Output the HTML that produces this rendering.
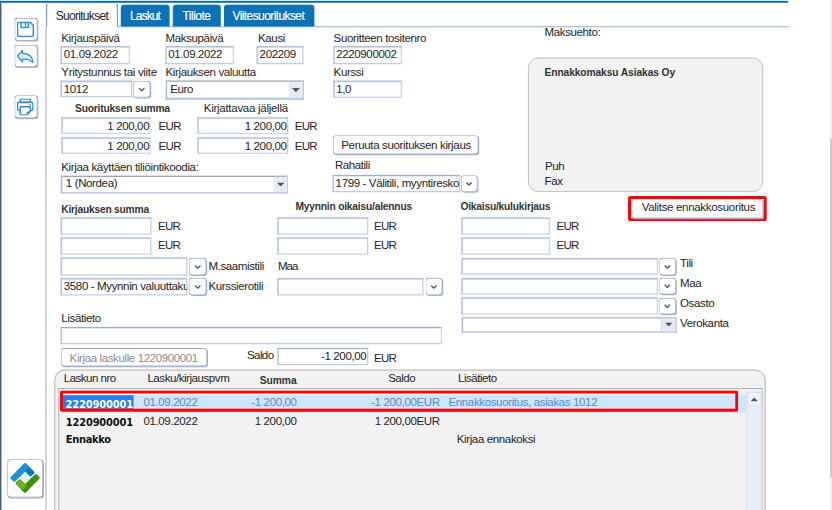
<!DOCTYPE html>
<html lang="fi">
<head>
<meta charset="utf-8">
<title>Suoritukset</title>
<style>
html,body{margin:0;padding:0;}
body{width:832px;height:510px;overflow:hidden;background:#fff;position:relative;
 font-family:"Liberation Sans",sans-serif;color:#1c1c1c;}
#s{position:absolute;left:0;top:0;width:1040px;height:638px;transform:scale(.8);transform-origin:0 0;overflow:hidden;
 font-family:"Liberation Sans",sans-serif;font-size:13.75px;}
#s div,#s span,#s svg,#s i{position:absolute;box-sizing:border-box;display:block;}
.f{position:absolute;}
.t{white-space:nowrap;line-height:16px;height:16px;font-size:14.4px;letter-spacing:-0.46px;color:#242424;}
.b{font-weight:bold;font-size:12.8px;letter-spacing:-0.25px;color:#333;}
.lb{font-family:"DejaVu Sans Condensed","DejaVu Sans","Liberation Sans",sans-serif;font-stretch:condensed;font-weight:bold;font-size:13.75px;letter-spacing:0;color:#111;}
.w{color:#fff;-webkit-text-stroke:0.2px #fff;}
.tb{font-size:15px;}
.in{border:1px solid #b1c1dc;border-top-color:#8a9cba;border-left-color:#90a3c2;background:#fff;box-shadow:inset 1px 1px 0 #dde5f1, 0 0 0 1px rgba(205,216,235,.4);overflow:hidden;}
.cb{background:#fff;border:2px solid #bccae3;border-left-color:#aebdd9;border-top:1px solid #cfdaec;}
.cb i{left:0;right:0;top:0;height:1px;background:#8e8e8e;}
.dd{border:1px solid #a3b3cf;border-top-color:#8f8f8f;border-radius:4px;background:#fff;box-shadow:1px 1px 0 #a0b3d4;}
.btn{border:1px solid #a3b3cf;border-top-color:#8f8f8f;border-radius:4px;background:#fff;box-shadow:1px 1px 0 #a0b3d4;}
.ib{border:1px solid #90959f;border-top-color:#8c8c8c;border-radius:4px;background:#fff;box-shadow:1px 1px 0 #a3b4d2;}
.arr{background:#e5eaf5;}
</style>
</head>
<body>
<div id="s">
<div class="x" style="left:56.7px;top:33px;width:1.1px;height:610px;background:#8f929a;"></div>
<div class="x" style="left:146.5px;top:32.6px;width:839px;height:1.2px;background:#6f9ad0;"></div>
<div class="ib" style="left:18px;top:22px;width:29px;height:29px;"></div>
<div class="ib" style="left:18px;top:56px;width:29px;height:28px;"></div>
<div class="ib" style="left:18px;top:119px;width:29px;height:29px;"></div>
<div class="ib" style="left:9px;top:574px;width:45px;height:48px;"></div>
<svg width="21.5" height="19.5" viewBox="0 0 17.2 15.6" style="left:21.38px;top:27.25px;"><path d="M2.4 0.7 H13.4 L16.5 3.8 V13 Q16.5 14.9 14.6 14.9 H2.6 Q0.7 14.9 0.7 13 V2.4 Q0.7 0.7 2.4 0.7 Z" fill="none" stroke="#2a8be0" stroke-width="1.45"/><path d="M3.6 0.7 V5.6 Q3.6 6.6 4.6 6.6 H11.4 Q12.4 6.6 12.4 5.6 V0.7 Z" fill="#2a8be0"/><rect x="5" y="1.6" width="3" height="3.8" fill="#fff"/><rect x="9.2" y="1.6" width="1.6" height="3.8" fill="#dff0ff"/></svg>
<svg width="21.25" height="17.25" viewBox="0 0 17 13.8" style="left:21.38px;top:61.75px;"><path d="M0.7 6.5 L5.7 0.8 V3.8 C11.6 3.8 15.7 6.6 16.3 13.1 C14 10.2 10.6 9.3 5.7 9.5 V12.4 Z" fill="#e3f0fd" stroke="#2a8be0" stroke-width="1.25" stroke-linejoin="round"/></svg>
<svg width="21" height="21.5" viewBox="0 0 16.8 17.2" style="left:21.25px;top:122.5px;"><rect x="3.4" y="0.7" width="10" height="3.4" rx="1" fill="none" stroke="#2a8be0" stroke-width="1.45"/><path d="M3.4 12 H2.4 Q0.7 12 0.7 10.3 V5.6 Q0.7 3.9 2.4 3.9 H14.4 Q16.1 3.9 16.1 5.6 V10.3 Q16.1 12 14.4 12 H13.4" fill="none" stroke="#2a8be0" stroke-width="1.45"/><path d="M3.4 8.4 H13.4 V13 L10 16.5 H4.4 Q3.4 16.5 3.4 15.5 Z" fill="#fff" stroke="#2a8be0" stroke-width="1.45" stroke-linejoin="round"/><path d="M13.4 13 L10 16.5 V13 Z" fill="#2a8be0"/><circle cx="13.3" cy="6.3" r="0.8" fill="#2a8be0"/></svg>
<svg width="38.75" height="38.75" viewBox="0 0 30 30" style="left:12.38px;top:577.88px;"><g transform="rotate(45 15 15)"><rect x="10.4" y="10.4" width="9.2" height="9.2" fill="#eaedf4"/><rect x="4.55" y="4.55" width="13.6" height="6.15" rx="1.3" fill="#0f77c8"/><rect x="4.55" y="4.55" width="6.15" height="20.9" rx="1.6" fill="#1c90de"/><rect x="19.3" y="4.55" width="6.15" height="20.9" rx="1.6" fill="#3e9113"/><rect x="11.85" y="19.3" width="13.6" height="6.15" rx="1.3" fill="#3e9113"/><rect x="11.85" y="19.3" width="9.5" height="6.15" rx="1.3" fill="#69af22"/><rect x="17" y="19.3" width="4.35" height="6.15" fill="#69af22"/></g></svg>
<div class="x" style="left:56.6px;top:4px;width:91.2px;height:29.8px;background:#fff;border:2px solid #7f9ac2;border-top:1px solid #d3d6dc;border-bottom:none;border-radius:4px 4px 0 0;"></div>
<span id="t1" class="t tb" style="left:69.62px;top:12.4px;letter-spacing:-0.87px;">Suoritukset</span>
<div class="x" style="left:151px;top:6px;width:61px;height:27px;background:#0a72b6;border-radius:4px 4px 0 0;"></div>
<span id="t2" class="t w tb" style="left:162.5px;top:12.4px;letter-spacing:-1.1px;">Laskut</span>
<div class="x" style="left:216px;top:6px;width:60px;height:27px;background:#0a72b6;border-radius:4px 4px 0 0;"></div>
<span id="t3" class="t w tb" style="left:228.12px;top:12.4px;letter-spacing:-0.63px;">Tiliote</span>
<div class="x" style="left:280px;top:6px;width:113px;height:27px;background:#0a72b6;border-radius:4px 4px 0 0;"></div>
<span id="t4" class="t w tb" style="left:290.62px;top:12.4px;letter-spacing:-0.74px;">Viitesuoritukset</span>
<span id="t5" class="t " style="left:76.62px;top:39.15px;">Kirjauspäivä</span>
<span id="t6" class="t " style="left:206.88px;top:39.15px;">Maksupäivä</span>
<span id="t7" class="t " style="left:322.5px;top:39.15px;">Kausi</span>
<span id="t8" class="t " style="left:417px;top:39.15px;">Suoritteen tositenro</span>
<span id="t9" class="t " style="left:680.62px;top:32.4px;">Maksuehto:</span>
<div class="in" style="left:76px;top:58px;width:86px;height:22px;"></div>
<span id="t10" class="t " style="left:79.75px;top:59.9px;">01.09.2022</span>
<div class="in" style="left:207px;top:58px;width:85px;height:22px;"></div>
<span id="t11" class="t " style="left:210.25px;top:59.9px;">01.09.2022</span>
<div class="in" style="left:321px;top:58px;width:58px;height:22px;"></div>
<span id="t12" class="t " style="left:324.5px;top:59.9px;">202209</span>
<div class="in" style="left:417px;top:58px;width:85px;height:22px;"></div>
<span id="t13" class="t " style="left:420.25px;top:59.9px;">2220900002</span>
<span id="t14" class="t " style="left:76.62px;top:81.78px;letter-spacing:-0.39px;">Yritystunnus tai viite</span>
<span id="t15" class="t " style="left:206.88px;top:81.78px;">Kirjauksen valuutta</span>
<span id="t16" class="t " style="left:417px;top:81.78px;">Kurssi</span>
<div class="in" style="left:76px;top:101px;width:89px;height:20px;"></div>
<span id="t17" class="t " style="left:79.75px;top:103.03px;">1012</span>
<div class="dd" style="left:166px;top:101px;width:22px;height:21px;"><svg width="8.5" height="5.5" viewBox="0 0 6.8 4.4" style="left:50%;top:50%;margin-left:-4.3px;margin-top:-2.2px;"><path d="M0.7 0.8 L3.4 3.5 L6.1 0.8" fill="none" stroke="#585858" stroke-width="1.4"/></svg></div>
<div class="cb" style="left:207px;top:100px;width:173px;height:25px;border-bottom-width:3px;"><i></i></div>
<div class="x" style="left:361px;top:102px;width:1px;height:20px;background:#d3ddee;"></div>
<div class="arr" style="left:362px;top:103px;width:16px;height:19px;"><svg width="9.75" height="5.25" viewBox="0 0 7.8 4.2" style="left:50%;top:50%;margin-left:-4.9px;margin-top:-2.9px;"><path d="M0 0 H7.8 L3.9 4.2 Z" fill="#4b556e"/></svg></div>
<span id="t18" class="t " style="left:212.75px;top:103.03px;">Euro</span>
<div class="in" style="left:417px;top:101px;width:85px;height:21px;"></div>
<span id="t19" class="t " style="left:420.25px;top:103.03px;">1,0</span>
<span id="t20" class="t b" style="left:93.75px;top:128.15px;letter-spacing:-0.22px;">Suorituksen summa</span>
<span id="t21" class="t " style="left:254.75px;top:126.78px;letter-spacing:-0.35px;">Kirjattavaa jäljellä</span>
<div class="in" style="left:77px;top:147px;width:111px;height:20px;"></div>
<span id="t22" class="t " style="right:853.5px;top:149.9px;">1 200,00</span>
<span id="t23" class="t " style="left:198px;top:149.9px;letter-spacing:-0.66px;">EUR</span>
<div class="in" style="left:247px;top:147px;width:113px;height:20px;"></div>
<span id="t24" class="t " style="right:681.75px;top:149.9px;">1 200,00</span>
<span id="t25" class="t " style="left:368.38px;top:149.9px;letter-spacing:-0.91px;">EUR</span>
<div class="in" style="left:77px;top:172px;width:111px;height:20px;"></div>
<span id="t26" class="t " style="right:853.5px;top:174.65px;">1 200,00</span>
<span id="t27" class="t " style="left:198px;top:174.65px;letter-spacing:-0.66px;">EUR</span>
<div class="in" style="left:247px;top:172px;width:113px;height:20px;"></div>
<span id="t28" class="t " style="right:681.75px;top:174.65px;">1 200,00</span>
<span id="t29" class="t " style="left:368.38px;top:174.65px;letter-spacing:-0.91px;">EUR</span>
<div class="btn" style="left:416px;top:169px;width:182px;height:24px;"></div>
<span id="t30" class="t " style="left:426.62px;top:172.78px;letter-spacing:-0.43px;">Peruuta suorituksen kirjaus</span>
<span id="t31" class="t " style="left:76.62px;top:201.15px;letter-spacing:-0.44px;">Kirjaa käyttäen tiliöintikoodia:</span>
<span id="t32" class="t " style="left:418.75px;top:198.03px;letter-spacing:-0.57px;">Rahatili</span>
<div class="cb" style="left:76px;top:219px;width:284px;height:23px;border-bottom-width:2px;"><i></i></div>
<div class="x" style="left:342px;top:221px;width:1px;height:19px;background:#d3ddee;"></div>
<div class="arr" style="left:343px;top:221px;width:16px;height:19px;"><svg width="9.75" height="5.25" viewBox="0 0 7.8 4.2" style="left:50%;top:50%;margin-left:-4.9px;margin-top:-2.9px;"><path d="M0 0 H7.8 L3.9 4.2 Z" fill="#4b556e"/></svg></div>
<span id="t33" class="t " style="left:82.25px;top:220.9px;">1 (Nordea)</span>
<div class="in" style="left:416px;top:219px;width:159px;height:21px;"></div>
<span id="t34" class="t " style="left:419.5px;top:220.9px;width:154.5px;overflow:hidden;">1799 - Välitili, myyntiresko</span>
<div class="dd" style="left:576px;top:219px;width:21px;height:21px;"><svg width="8.5" height="5.5" viewBox="0 0 6.8 4.4" style="left:50%;top:50%;margin-left:-4.3px;margin-top:-2.2px;"><path d="M0.7 0.8 L3.4 3.5 L6.1 0.8" fill="none" stroke="#585858" stroke-width="1.4"/></svg></div>
<div class="x" style="left:660px;top:72px;width:294px;height:168px;background:#f2f2f2;border:1px solid #b4b4b4;border-radius:13px;"></div>
<span id="t35" class="t b" style="left:680.62px;top:83.15px;letter-spacing:-0.12px;">Ennakkomaksu Asiakas Oy</span>
<span id="t36" class="t " style="left:681.25px;top:200.4px;">Puh</span>
<span id="t37" class="t " style="left:680.62px;top:217.9px;">Fax</span>
<svg width="173.38" height="31.62" viewBox="0 0 138.7 25.3" style="left:785.38px;top:245.38px;"><rect x="1.5" y="1.5" width="135.7" height="22.3" rx="0.8" fill="none" stroke="#ff0000" stroke-width="3"/></svg>
<div class="btn" style="left:789px;top:249px;width:165px;height:24px;"></div>
<span id="t38" class="t " style="left:802.12px;top:251.15px;letter-spacing:-0.4px;">Valitse ennakkosuoritus</span>
<span id="t39" class="t b" style="left:76.62px;top:254.4px;letter-spacing:-0.27px;">Kirjauksen summa</span>
<span id="t40" class="t b" style="left:369.25px;top:250.9px;letter-spacing:-0.25px;">Myynnin oikaisu/alennus</span>
<span id="t41" class="t b" style="left:575.62px;top:250.9px;letter-spacing:-0.27px;">Oikaisu/kulukirjaus</span>
<div class="in" style="left:76px;top:272px;width:113px;height:21px;"></div>
<span id="t42" class="t " style="left:197.5px;top:274.02px;letter-spacing:-0.91px;">EUR</span>
<div class="in" style="left:347px;top:272px;width:113px;height:21px;"></div>
<span id="t43" class="t " style="left:467.5px;top:274.02px;letter-spacing:-0.91px;">EUR</span>
<div class="in" style="left:577px;top:272px;width:110px;height:21px;"></div>
<span id="t44" class="t " style="left:695.75px;top:274.02px;letter-spacing:-1.01px;">EUR</span>
<div class="in" style="left:76px;top:297px;width:113px;height:21px;"></div>
<span id="t45" class="t " style="left:197.5px;top:298.4px;letter-spacing:-0.91px;">EUR</span>
<div class="in" style="left:347px;top:297px;width:113px;height:21px;"></div>
<span id="t46" class="t " style="left:467.5px;top:298.4px;letter-spacing:-0.91px;">EUR</span>
<div class="in" style="left:577px;top:297px;width:110px;height:21px;"></div>
<span id="t47" class="t " style="left:695.75px;top:298.4px;letter-spacing:-1.01px;">EUR</span>
<div class="in" style="left:76px;top:322px;width:158px;height:22px;"></div>
<div class="dd" style="left:236px;top:322px;width:22px;height:22px;"><svg width="8.5" height="5.5" viewBox="0 0 6.8 4.4" style="left:50%;top:50%;margin-left:-4.3px;margin-top:-2.2px;"><path d="M0.7 0.8 L3.4 3.5 L6.1 0.8" fill="none" stroke="#585858" stroke-width="1.4"/></svg></div>
<span id="t48" class="t " style="left:260.5px;top:324.65px;letter-spacing:-0.49px;">M.saamistili</span>
<span id="t49" class="t " style="left:347.38px;top:324.65px;letter-spacing:-1.15px;">Maa</span>
<div class="in" style="left:76px;top:348px;width:158px;height:21px;"></div>
<span id="t50" class="t " style="left:79.75px;top:349.15px;width:153.75px;overflow:hidden;">3580 - Myynnin valuuttaku</span>
<div class="dd" style="left:236px;top:347px;width:22px;height:22px;"><svg width="8.5" height="5.5" viewBox="0 0 6.8 4.4" style="left:50%;top:50%;margin-left:-4.3px;margin-top:-2.2px;"><path d="M0.7 0.8 L3.4 3.5 L6.1 0.8" fill="none" stroke="#585858" stroke-width="1.4"/></svg></div>
<span id="t51" class="t " style="left:260.5px;top:349.4px;letter-spacing:-0.45px;">Kurssierotili</span>
<div class="in" style="left:347px;top:348px;width:182px;height:21px;"></div>
<div class="dd" style="left:532px;top:347px;width:21px;height:22px;"><svg width="8.5" height="5.5" viewBox="0 0 6.8 4.4" style="left:50%;top:50%;margin-left:-4.3px;margin-top:-2.2px;"><path d="M0.7 0.8 L3.4 3.5 L6.1 0.8" fill="none" stroke="#585858" stroke-width="1.4"/></svg></div>
<div class="in" style="left:577px;top:323px;width:245px;height:20px;"></div>
<div class="dd" style="left:824px;top:322px;width:21px;height:22px;"><svg width="8.5" height="5.5" viewBox="0 0 6.8 4.4" style="left:50%;top:50%;margin-left:-4.3px;margin-top:-2.2px;"><path d="M0.7 0.8 L3.4 3.5 L6.1 0.8" fill="none" stroke="#585858" stroke-width="1.4"/></svg></div>
<span id="t52" class="t " style="left:850px;top:320.77px;">Tili</span>
<div class="in" style="left:577px;top:348px;width:245px;height:20px;"></div>
<div class="dd" style="left:824px;top:347px;width:21px;height:21px;"><svg width="8.5" height="5.5" viewBox="0 0 6.8 4.4" style="left:50%;top:50%;margin-left:-4.3px;margin-top:-2.2px;"><path d="M0.7 0.8 L3.4 3.5 L6.1 0.8" fill="none" stroke="#585858" stroke-width="1.4"/></svg></div>
<span id="t53" class="t " style="left:850px;top:346.02px;">Maa</span>
<div class="in" style="left:577px;top:372px;width:245px;height:21px;"></div>
<div class="dd" style="left:824px;top:372px;width:21px;height:21px;"><svg width="8.5" height="5.5" viewBox="0 0 6.8 4.4" style="left:50%;top:50%;margin-left:-4.3px;margin-top:-2.2px;"><path d="M0.7 0.8 L3.4 3.5 L6.1 0.8" fill="none" stroke="#585858" stroke-width="1.4"/></svg></div>
<span id="t54" class="t " style="left:850px;top:371.4px;">Osasto</span>
<div class="cb" style="left:577px;top:396px;width:269px;height:20px;border-bottom-width:2px;"><i></i></div>
<div class="x" style="left:826px;top:398px;width:2px;height:16px;background:#d3ddee;"></div>
<div class="arr" style="left:828px;top:398px;width:16px;height:16px;"><svg width="9.75" height="5.25" viewBox="0 0 7.8 4.2" style="left:50%;top:50%;margin-left:-4.9px;margin-top:-2.9px;"><path d="M0 0 H7.8 L3.9 4.2 Z" fill="#4b556e"/></svg></div>
<span id="t55" class="t " style="left:850px;top:396.4px;">Verokanta</span>
<span id="t56" class="t " style="left:76.62px;top:389.9px;letter-spacing:-0.47px;">Lisätieto</span>
<div class="in" style="left:76px;top:409px;width:476px;height:21px;"></div>
<div class="btn" style="left:76px;top:435px;width:183px;height:23px;"></div>
<span id="t57" class="t " style="left:87px;top:438.9px;letter-spacing:-0.48px;color:#8c8c8c;">Kirjaa laskulle 1220900001</span>
<span id="t58" class="t " style="left:308.75px;top:435.52px;letter-spacing:-0.74px;">Saldo</span>
<div class="in" style="left:347px;top:435px;width:113px;height:21px;"></div>
<span id="t59" class="t " style="right:582.12px;top:436.9px;">-1 200,00</span>
<span id="t60" class="t " style="left:467.5px;top:439.9px;letter-spacing:-0.91px;">EUR</span>
<div class="x" style="left:68px;top:462px;width:889px;height:200px;background:#f2f2f2;border:1px solid #9f9f9f;border-radius:13px;"></div>
<span id="t61" class="t " style="left:79.75px;top:465.15px;letter-spacing:-0.63px;">Laskun nro</span>
<span id="t62" class="t " style="left:184.25px;top:465.15px;letter-spacing:-0.55px;">Lasku/kirjauspvm</span>
<span id="t63" class="t b" style="left:324.75px;top:468.02px;letter-spacing:-0.05px;">Summa</span>
<span id="t64" class="t " style="left:485.25px;top:465.27px;letter-spacing:-0.65px;">Saldo</span>
<span id="t65" class="t " style="left:572.5px;top:465.27px;letter-spacing:-0.59px;">Lisätieto</span>
<div class="x" style="left:73px;top:485px;width:880px;height:177px;background:#f2f2f2;border:1px solid #9da1ab;"></div>
<div class="x" style="left:74px;top:494px;width:859px;height:22px;background:#cce8ff;"></div>
<div class="x" style="left:78px;top:494px;width:89px;height:17px;background:#2080f6;"></div>
<span id="t66" class="t lb" style="left:82px;top:496.65px;letter-spacing:-0.19px;color:#fff;">2220900001</span>
<span id="t67" class="t " style="left:179.25px;top:494.27px;letter-spacing:-0.45px;color:#5688dc;">01.09.2022</span>
<span id="t68" class="t " style="right:669.25px;top:494.27px;color:#5688dc;">-1 200,00</span>
<span id="t69" class="t " style="right:490.38px;top:494.27px;color:#5688dc;">-1 200,00EUR</span>
<span id="t70" class="t " style="left:560.62px;top:494.27px;color:#5688dc;">Ennakkosuoritus, asiakas 1012</span>
<svg width="847.88" height="26.75" viewBox="0 0 678.3 21.4" style="left:75px;top:487.88px;"><rect x="1.5" y="1.5" width="675.3" height="18.4" rx="0.8" fill="none" stroke="#ff0000" stroke-width="3"/></svg>
<span id="t71" class="t lb" style="left:82.25px;top:520.4px;letter-spacing:-0.22px;">1220900001</span>
<span id="t72" class="t " style="left:179.25px;top:518.02px;letter-spacing:-0.45px;">01.09.2022</span>
<span id="t73" class="t " style="right:669.25px;top:518.02px;">1 200,00</span>
<span id="t74" class="t " style="right:490.38px;top:518.02px;">1 200,00EUR</span>
<span id="t75" class="t lb" style="left:82.25px;top:541.4px;letter-spacing:-0.39px;">Ennakko</span>
<span id="t76" class="t " style="left:570.88px;top:540.77px;">Kirjaa ennakoksi</span>
<div class="x" style="left:933px;top:488px;width:19px;height:174px;background:#e8eef7;border-left:1px solid #d9e0ec;"></div>
<div class="x" style="left:934px;top:490px;width:18px;height:18px;background:#f0f3f9;border:1px solid #d3dae8;border-radius:2px;"><svg width="9.75" height="4.88" viewBox="0 0 7.8 3.9" style="left:50%;top:50%;margin-left:-5.4px;margin-top:-2.2px;"><path d="M0 3.9 H7.8 L3.9 0 Z" fill="#4b556e"/></svg></div>
</div>
<div class="f" style="left:0;top:0;width:788px;height:1px;background:#d9ebf6"></div>
<div class="f" style="left:0;top:1px;width:788px;height:1px;background:#0560b0"></div>
<div class="f" style="left:0;top:2px;width:788px;height:1px;background:#3f8fcc"></div>
<div class="f" style="left:0;top:3px;width:1px;height:507px;background:#456087"></div>
<div class="f" style="left:1px;top:3px;width:1px;height:507px;background:#b0b1b6"></div>
<div class="f" style="left:830px;top:0;width:2px;height:138px;background:#efefef"></div>
<div class="f" style="left:830px;top:138px;width:2px;height:340px;background:#cacaca"></div>
<div class="f" style="left:830px;top:478px;width:2px;height:32px;background:#f1f1f1"></div>
</body>
</html>
